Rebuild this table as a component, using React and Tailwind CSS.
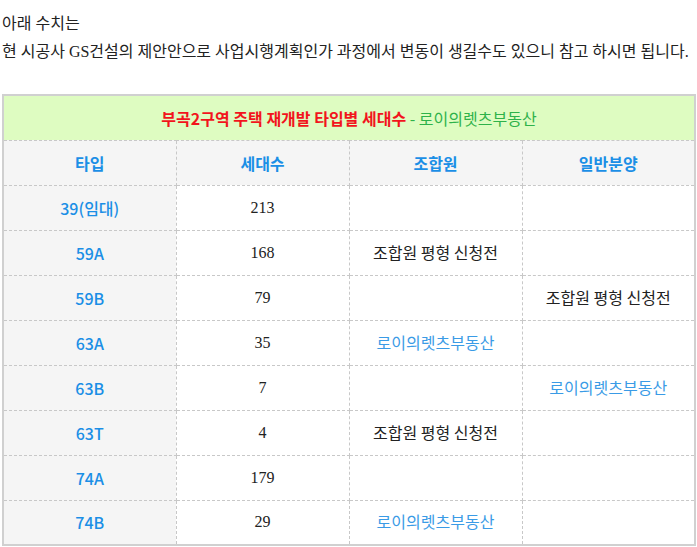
import React from 'react';

const rows = [
  { type: '39(임대)', count: '213', member: '', general: '' },
  { type: '59A', count: '168', member: '조합원 평형 신청전', general: '' },
  { type: '59B', count: '79', member: '', general: '조합원 평형 신청전' },
  { type: '63A', count: '35', member: 'link', general: '' },
  { type: '63B', count: '7', member: '', general: 'link' },
  { type: '63T', count: '4', member: '조합원 평형 신청전', general: '' },
  { type: '74A', count: '179', member: '', general: '' },
  { type: '74B', count: '29', member: 'link', general: '' },
];

const sans = "font-['Noto_Sans_CJK_KR',sans-serif]";

function Cell({ value }) {
  if (value === 'link') {
    return <span className={`${sans} text-[#3a9be6]`}>로이의렛츠부동산</span>;
  }
  return <span className={`${sans} text-[#222]`}>{value}</span>;
}

export default function App() {
  return (
    <div className="w-[697px] h-[547px] overflow-hidden bg-white pl-[2px] font-['Liberation_Serif','Noto_Sans_CJK_KR',serif] text-[16px] text-[#222]">
      <div className="pt-[10px] leading-[28px]">
        <p>아래 수치는</p>
        <p>현 시공사 GS건설의 제안안으로 사업시행계획인가 과정에서 변동이 생길수도 있으니 참고 하시면 됩니다.</p>
      </div>

      <table className="mt-[28px] w-[694px] table-fixed border-collapse border-2 border-[#d0d0d0] text-center text-[16px]">
        <thead>
          <tr className="h-[45px] bg-[#defcc1]">
            <th colSpan={4} className={`${sans} font-normal border-b border-dashed border-[#c8c8c8]`}>
              <span className="text-[#f2141c] font-semibold">부곡2구역 주택 재개발 타입별 세대수</span>
              <span className="text-[#2eb24a]"> - 로이의렛츠부동산</span>
            </th>
          </tr>
          <tr className="h-[45px] bg-[#f5f5f5]">
            {['타입', '세대수', '조합원', '일반분양'].map((h) => (
              <th key={h} className={`${sans} font-semibold text-[#1b8fe6] border border-dashed border-[#c8c8c8]`}>
                {h}
              </th>
            ))}
          </tr>
        </thead>
        <tbody>
          {rows.map((r) => (
            <tr key={r.type} className="h-[45px]">
              <td className={`${sans} bg-[#f5f5f5] font-medium text-[#1b8fe6] border border-dashed border-[#c8c8c8]`}>
                {r.type}
              </td>
              <td className="border border-dashed border-[#c8c8c8] font-['Liberation_Serif',serif]">{r.count}</td>
              <td className="border border-dashed border-[#c8c8c8]"><Cell value={r.member} /></td>
              <td className="border border-dashed border-[#c8c8c8]"><Cell value={r.general} /></td>
            </tr>
          ))}
        </tbody>
      </table>
    </div>
  );
}
